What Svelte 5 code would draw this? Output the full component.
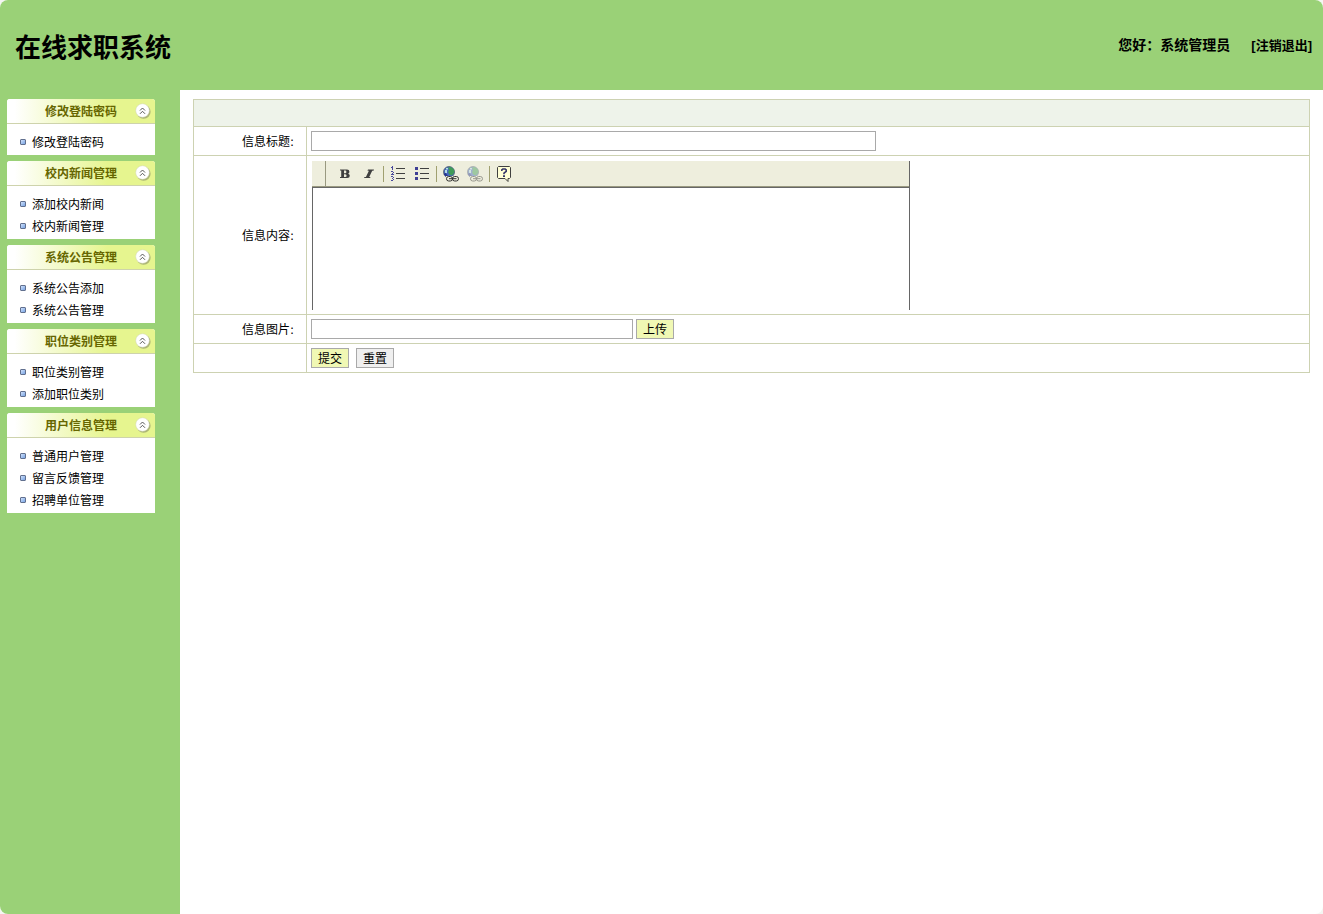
<script lang="ts">
    // Sidebar menu
    let menuGroups = [
        { title: '修改登陆密码', items: ['修改登陆密码'] },
        { title: '校内新闻管理', items: ['添加校内新闻', '校内新闻管理'] },
        { title: '系统公告管理', items: ['系统公告添加', '系统公告管理'] },
        { title: '职位类别管理', items: ['职位类别管理', '添加职位类别'] },
        { title: '用户信息管理', items: ['普通用户管理', '留言反馈管理', '招聘单位管理'] }
    ];

    let closed: Record<string, boolean> = {};

    let title = '';
    let content = '';
    let picture = '';

    function toggle(name: string) {
        closed[name] = !closed[name];
    }
</script>

<div class="page">
    <header class="header">
        <h1>在线求职系统</h1>
        <div class="user">
            <span>您好：系统管理员</span>
            <a href="/logout">[注销退出]</a>
        </div>
    </header>

    <div class="body">
        <nav class="sidebar">
            {#each menuGroups as group}
                <section class="group">
                    <button class="group-title" type="button" on:click={() => toggle(group.title)}>
                        <span>{group.title}</span>
                        <svg width="16" height="16" viewBox="0 0 16 16" aria-hidden="true">
                            <circle cx="8.6" cy="8.8" r="7" fill="#8f9468" opacity=".65" />
                            <circle cx="7.5" cy="7.5" r="6.8" fill="#fff" stroke="#d3d7b8" stroke-width=".5" />
                            <path d="M5 7.5 7.5 5 10 7.5M5 10.8 7.5 8.3 10 10.8" fill="none" stroke="#444" stroke-width=".9" />
                        </svg>
                    </button>
                    {#if !closed[group.title]}
                        <ul>
                            {#each group.items as item}
                                <li><a href="#menu">{item}</a></li>
                            {/each}
                        </ul>
                    {/if}
                </section>
            {/each}
        </nav>

        <main>
            <form on:submit|preventDefault>
                <table>
                    <tbody>
                        <tr class="caption"><td colspan="2"></td></tr>
                        <tr>
                            <th><label for="title">信息标题:</label></th>
                            <td><div class="line"><input id="title" class="long" type="text" bind:value={title} /></div></td>
                        </tr>
                        <tr>
                            <th><label for="content">信息内容:</label></th>
                            <td>
                                <div class="editor">
                                    <div class="toolbar">
                                        <span class="grip"></span>
                                        <button type="button" aria-label="Bold">
                                            <svg width="16" height="16" viewBox="0 0 16 16">
                                                <path d="M3 3.5h7q2.4 0 2.4 2.2 0 1.4-1.3 2 1.7.5 1.7 2.1 0 2.2-2.6 2.2H3v-1h1.2v-6.500H3zM7 4.500v2.800h1.200q1.200 0 1.200-1.400T8.200 4.500zM7 8.300v2.700h1.300q1.300 0 1.300-1.300T8.300 8.300z" fill="#404040" fill-rule="evenodd" />
                                            </svg>
                                        </button>
                                        <button type="button" aria-label="Italic">
                                            <svg width="16" height="16" viewBox="0 0 16 16">
                                                <path d="M7 3.500h6l-.5 1.200h-1.300l-3 6.200h1.400L9 12H3l.5-1.100h1.400l3-6.200H6.500z" fill="#404040" />
                                            </svg>
                                        </button>
                                        <span class="sep"></span>
                                        <button type="button" aria-label="Numbered list">
                                            <svg width="16" height="16" viewBox="0 0 16 16" shape-rendering="crispEdges">
                                                <path d="M6 2h9v1H6zM6 7h9v1H6zM6 12h9v1H6z" fill="#404040" />
                                                <path d="M2 0h1v4H2zM1 1h1v1H1zM1 5h2v1H1zM3 6h1v1H3zM2 7h1v1H2zM1 8h3v1H1zM1 10h2v1H1zM3 11h1v1H3zM2 12h1v1H2zM3 13h1v1H3zM1 14h2v1H1z" fill="#4a4a9c" />
                                            </svg>
                                        </button>
                                        <button type="button" aria-label="Bulleted list">
                                            <svg width="16" height="16" viewBox="0 0 16 16" shape-rendering="crispEdges">
                                                <path d="M6 2h9v1H6zM6 7h9v1H6zM6 12h9v1H6z" fill="#404040" />
                                                <path d="M1 1h3v3H1zM1 6h3v3H1zM1 11h3v3H1z" fill="#3f3f94" />
                                            </svg>
                                        </button>
                                        <span class="sep"></span>
                                        {#each ['Insert link', 'Remove link'] as name, i}
                                            <button type="button" aria-label={name} disabled={i === 1}>
                                                <svg width="16" height="16" viewBox="0 0 16 16">
                                                    <circle cx="6" cy="6" r="5.5" fill="#4668bd" stroke="#52606c" stroke-width=".8" />
                                                    <path d="M5 1.500 8 1l3 2.500.3 3L9 9.500 6.500 8.800 5 6l1-2z" fill="#3f9b58" />
                                                    <path d="M3 2h2v1.500H3zM2 4h2v3H2z" fill="#b5dce8" />
                                                    <path d="M1.500 7.500 4.500 11" stroke="#25348c" stroke-width="2" />
                                                    <path d="M3 10h13v6H3z" fill="#eeeedd" />
                                                    <rect x="3.500" y="10.500" width="6" height="4.500" rx="2.200" fill="none" stroke="#303030" />
                                                    <rect x="9.500" y="10.500" width="6" height="4.500" rx="2.200" fill="none" stroke="#303030" />
                                                    <path d="M6 12.700h7.500" stroke="#303030" />
                                                </svg>
                                            </button>
                                        {/each}
                                        <span class="sep"></span>
                                        <button type="button" aria-label="Help">
                                            <svg width="16" height="16" viewBox="0 0 16 16">
                                                <path d="M2.500.5h11l1 1v10l-1 1H12v3l-3-3H2.500l-1-1v-10z" fill="#ffffd5" stroke="#404040" />
                                                <path d="M5.800 5V3.800l1-.8h2.400l1 .9v1.400L8 7.100v1.200" fill="none" stroke="#353568" stroke-width="1.600" />
                                                <path d="M7 9.300h2v1.700H7z" fill="#353568" />
                                            </svg>
                                        </button>
                                    </div>
                                    <textarea id="content" bind:value={content}></textarea>
                                </div>
                            </td>
                        </tr>
                        <tr>
                            <th><label for="picture">信息图片:</label></th>
                            <td>
                                <div class="line upload">
                                    <input id="picture" class="short" type="text" bind:value={picture} />
                                    <button class="btn green" type="button">上传</button>
                                </div>
                            </td>
                        </tr>
                        <tr>
                            <th></th>
                            <td>
                                <div class="line actions">
                                    <button class="btn green" type="submit">提交</button>
                                    <button class="btn" type="reset">重置</button>
                                </div>
                            </td>
                        </tr>
                    </tbody>
                </table>
            </form>
        </main>
    </div>
</div>

<style>
    :global(body) {
        background: #f4f6f2;
        font-family: "Liberation Sans", "Noto Sans CJK SC", sans-serif;
        font-size: 12px;
        color: #000;
    }

    .page {
        display: flex;
        flex-direction: column;
        min-height: 100vh;
        background: #fff;
        border-radius: 8px;
        overflow: hidden;
    }

    .header {
        display: flex;
        justify-content: space-between;
        align-items: center;
        height: 90px;
        padding: 0 11px 0 15px;
        background: #9ad177;
    }

    h1 {
        margin: 0;
        padding-top: 6px;
        font-size: 26px;
        line-height: 36px;
    }

    .user {
        display: flex;
        align-items: center;
        gap: 21px;
        padding-bottom: 2px;
        font-size: 14px;
        font-weight: bold;
    }

    .user a {
        font-size: 13px;
    }

    a {
        color: #000;
        text-decoration: none;
    }

    .body {
        display: flex;
        flex: 1;
    }

    .sidebar {
        box-sizing: border-box;
        width: 180px;
        flex-shrink: 0;
        padding: 9px 25px 9px 7px;
        background: #9ad177;
    }

    .group {
        margin-bottom: 6px;
        background: #fff;
        border-radius: 3px 3px 0 0;
        overflow: hidden;
    }

    .group-title {
        display: flex;
        align-items: center;
        justify-content: space-between;
        width: 100%;
        height: 25px;
        padding: 0 4px 0 38px;
        border: 0;
        border-bottom: 1px solid #ced3ac;
        background: linear-gradient(to right, #fff 5%, #e6f58f 68%);
        color: #666600;
        font-family: inherit;
        font-size: 12px;
        font-weight: bold;
        cursor: pointer;
    }

    .group-title span,
    li a {
        padding-bottom: 2px;
    }

    ul {
        margin: 0;
        padding: 7px 0 2px 13px;
        list-style: none;
    }

    li {
        display: flex;
        align-items: center;
        gap: 6px;
        height: 22px;
    }

    li::before {
        content: "";
        box-sizing: border-box;
        width: 6px;
        height: 6px;
        border: 1px solid #61708f;
        border-radius: 1px;
        background: linear-gradient(135deg, #cfe0fa, #79a4e4);
    }

    main {
        flex: 1;
        padding: 9px 13px;
    }

    table {
        width: 100%;
        border-collapse: collapse;
    }

    th,
    td {
        padding: 4px;
        border: 1px solid #cdd2b2;
        text-align: left;
    }

    th {
        width: 96px;
        padding: 0 12px 2px 4px;
        font-family: "DejaVu Sans", "Noto Sans CJK SC", sans-serif;
        font-weight: normal;
        text-align: right;
    }

    .caption td {
        height: 18px;
        background: #eef3ea;
    }

    .line {
        display: flex;
        height: 20px;
    }

    .upload {
        gap: 3px;
    }

    .actions {
        gap: 7px;
    }

    input {
        box-sizing: border-box;
        height: 20px;
        padding: 1px 3px;
        border: 1px solid #a9a9a9;
        background: #fff;
        font: inherit;
    }

    .long {
        width: 565px;
    }

    .short {
        width: 322px;
    }

    .btn {
        width: 38px;
        height: 20px;
        padding: 1px 0 0;
        border: 1px solid #a9a9a9;
        background: #efefef;
        font-family: inherit;
        font-size: 12px;
        line-height: 18px;
        color: #000;
    }

    .green {
        background: #f0f8b4;
    }

    .editor {
        box-sizing: border-box;
        max-width: 598px;
        height: 149px;
        margin: 1px 0 0 1px;
        display: flex;
        flex-direction: column;
        border-right: 1px solid #666;
    }

    .toolbar {
        display: flex;
        align-items: center;
        height: 25px;
        border-bottom: 1px solid #999980;
        background: #eeeedd;
    }

    .toolbar button {
        width: 24px;
        height: 24px;
        padding: 4px;
        border: 0;
        background: none;
    }

    .toolbar button:disabled {
        opacity: 0.45;
    }

    .toolbar svg {
        display: block;
    }

    .grip {
        width: 13px;
        height: 25px;
        margin-right: 7px;
        border-right: 1px solid #999980;
    }

    .sep {
        width: 1px;
        height: 16px;
        margin: 0 2px;
        background: #a0a070;
    }

    textarea {
        flex: 1;
        padding: 4px;
        border: 0;
        border-top: 1px solid #666;
        border-left: 1px solid #666;
        outline: 0;
        resize: none;
        background: #fff;
        font: inherit;
    }
</style>
